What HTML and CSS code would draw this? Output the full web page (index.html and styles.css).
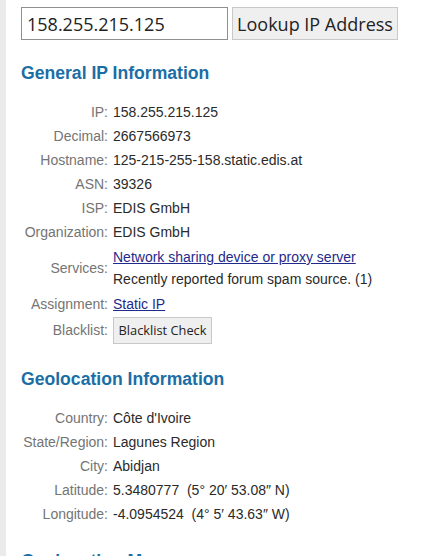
FILE: index.html
```html
<!DOCTYPE html>
<html>
<head>
<meta charset="utf-8">
<link rel="stylesheet" href="styles.css">
</head>
<body>
<div class="page">
  <form class="lookup">
    <input class="ip-input" type="text" value="158.255.215.125">
    <button class="lookup-btn" type="button">Lookup IP Address</button>
  </form>

  <h2 class="section-title">General IP Information</h2>
  <div class="info">
    <div class="label">IP:</div><div class="value">158.255.215.125</div>
    <div class="label">Decimal:</div><div class="value">2667566973</div>
    <div class="label">Hostname:</div><div class="value">125-215-255-158.static.edis.at</div>
    <div class="label">ASN:</div><div class="value">39326</div>
    <div class="label">ISP:</div><div class="value">EDIS GmbH</div>
    <div class="label">Organization:</div><div class="value">EDIS GmbH</div>
    <div class="label tall">Services:</div>
    <div class="value multi">
      <div class="line"><a href="#">Network sharing device or proxy server</a></div>
      <div class="line">Recently reported forum spam source. (1)</div>
    </div>
    <div class="label">Assignment:</div><div class="value"><a href="#">Static IP</a></div>
    <div class="label btn-row">Blacklist:</div><div class="value btn-row"><button class="small-btn" type="button">Blacklist Check</button></div>
  </div>

  <h2 class="section-title geo">Geolocation Information</h2>
  <div class="info">
    <div class="label">Country:</div><div class="value">Côte d'Ivoire</div>
    <div class="label">State/Region:</div><div class="value">Lagunes Region</div>
    <div class="label">City:</div><div class="value">Abidjan</div>
    <div class="label">Latitude:</div><div class="value">5.3480777&nbsp; (5° 20′ 53.08″ N)</div>
    <div class="label">Longitude:</div><div class="value">-4.0954524&nbsp; (4° 5′ 43.63″ W)</div>
  </div>

  <h2 class="section-title map">Geolocation Map</h2>
</div>
</body>
</html>
```
FILE: styles.css
```css
html, body {
  margin: 0;
  padding: 0;
  background: #ffffff;
}

.page {
  border-left: 6px solid #ebebeb;
  padding: 7px 0 0 15px;
  height: 556px;
  overflow: hidden;
  box-sizing: border-box;
  font-family: "Liberation Sans", Arial, sans-serif;
}

.lookup {
  display: flex;
  gap: 4px;
  margin: 0;
}

.ip-input {
  width: 207px;
  height: 33px;
  box-sizing: border-box;
  border: 1px solid #8f8f8f;
  padding: 0 5px;
  margin: 0;
  font-family: "Open Sans", sans-serif;
  font-size: 18px;
  color: #222;
  background: #fff;
}

.lookup-btn {
  width: 166px;
  height: 33px;
  box-sizing: border-box;
  border: 1px solid #c8c8c8;
  background: #efefef;
  margin: 0;
  padding: 0;
  font-family: "Open Sans", sans-serif;
  font-size: 18px;
  color: #222;
}

.section-title {
  margin: 23px 0 17px 0;
  font-family: "Liberation Sans", Arial, sans-serif;
  font-weight: bold;
  font-size: 17.6px;
  line-height: 20px;
  color: #1b6ea5;
}

.section-title.geo {
  margin-top: 25px;
  margin-bottom: 17px;
}

.section-title.map {
  margin-top: 25px;
}

.info {
  display: grid;
  grid-template-columns: 87px 1fr;
  column-gap: 5px;
  font-size: 14px;
}

.label {
  text-align: right;
  color: #747474;
  line-height: 24px;
  white-space: nowrap;
}

.label.tall {
  align-self: center;
}

.value {
  color: #2a2a2a;
  line-height: 24px;
  white-space: nowrap;
}

.value.multi {
  padding: 2px 0;
}

.value.multi .line {
  line-height: 22px;
}

.value a {
  color: #1f2a8a;
  text-decoration: underline;
}

.btn-row {
  height: 28px;
  line-height: 28px;
  display: flex;
  align-items: center;
}

.label.btn-row {
  justify-content: flex-end;
}

.small-btn {
  height: 27px;
  width: 99px;
  box-sizing: border-box;
  border: 1px solid #c8c8c8;
  background: #efefef;
  margin: 0;
  padding: 0;
  font-family: "Open Sans", sans-serif;
  font-size: 12.8px;
  color: #222;
}
```
